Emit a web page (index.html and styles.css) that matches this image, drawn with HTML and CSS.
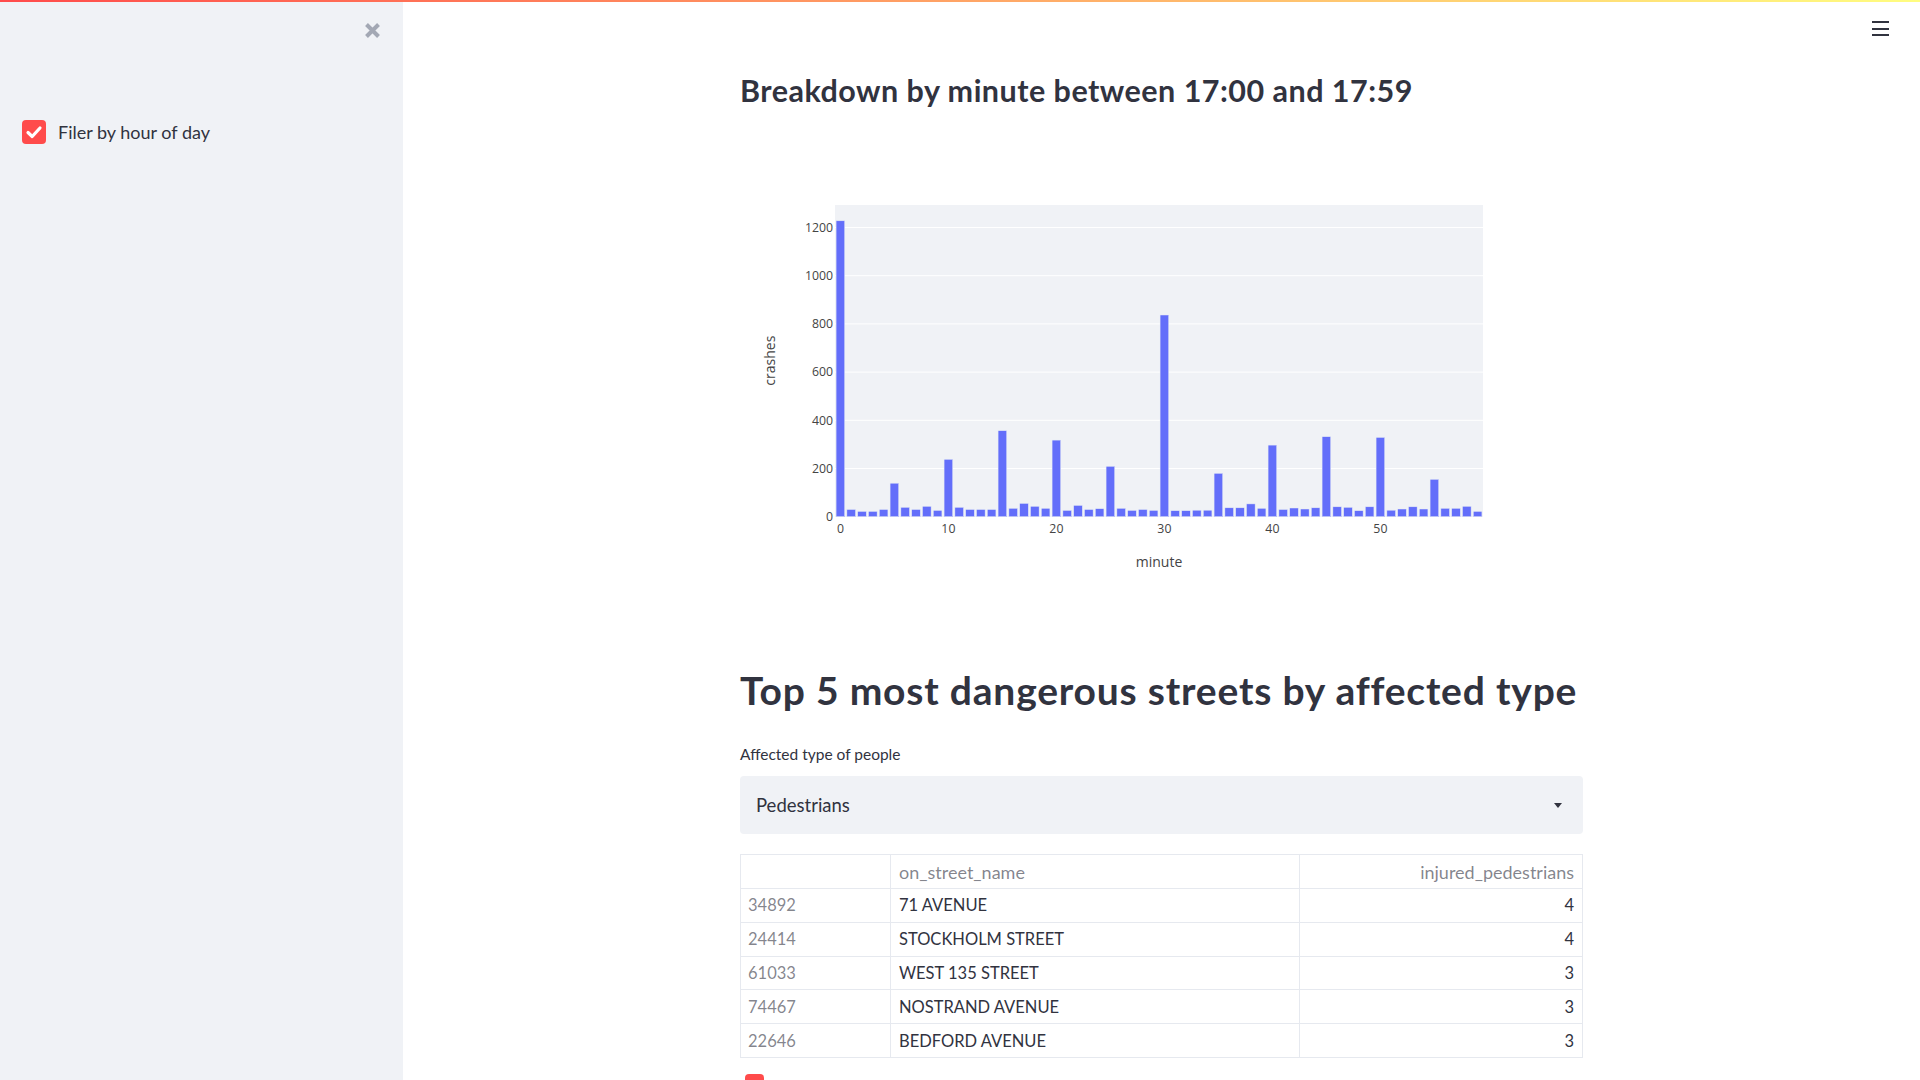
FILE: index.html
```html
<!DOCTYPE html>
<html>
<head>
<meta charset="utf-8">
<link rel="stylesheet" href="styles.css">
</head>
<body>
<div class="decoration"></div>
<div class="app">
  <aside class="sidebar">
    <div class="sidebar-top">
      <button class="close-btn" aria-label="close">
        <svg width="17" height="17" viewBox="0 0 17 17"><path d="M2.5 2.5 L14.5 14.5 M14.5 2.5 L2.5 14.5" stroke="#a3a8b4" stroke-width="4" stroke-linecap="butt"/></svg>
      </button>
    </div>
    <label class="checkbox">
      <span class="box"><svg width="24" height="24" viewBox="0 0 24 24"><path d="M6 12.5 L10.2 16.5 L18 8" fill="none" stroke="#fff" stroke-width="3.2" stroke-linecap="round" stroke-linejoin="round"/></svg></span>
      <span class="cb-label">Filer by hour of day</span>
    </label>
  </aside>
  <main class="main">
    <div class="menu-btn"><span></span><span></span><span></span></div>
    <div class="block">
      <h3 class="h3">Breakdown by minute between 17:00 and 17:59</h3>
      <svg class="chart" width="843" height="460" viewBox="0 0 843 460">
        <rect x="95" y="75" width="648" height="312" fill="#f0f2f6"/>
        <g stroke="#fff" stroke-width="1">
          <line x1="95" x2="743" y1="97.5" y2="97.5"/>
          <line x1="95" x2="743" y1="145.7" y2="145.7"/>
          <line x1="95" x2="743" y1="193.9" y2="193.9"/>
          <line x1="95" x2="743" y1="242.1" y2="242.1"/>
          <line x1="95" x2="743" y1="290.3" y2="290.3"/>
          <line x1="95" x2="743" y1="338.5" y2="338.5"/>
        </g>
        <g fill="#636efa" stroke="#e5ecf6" stroke-width="0.5">
          <rect x="96.08" y="90.8" width="8.64" height="295.9"/>
          <rect x="106.88" y="379.5" width="8.64" height="7.2"/>
          <rect x="117.68" y="381.4" width="8.64" height="5.3"/>
          <rect x="128.48" y="381.4" width="8.64" height="5.3"/>
          <rect x="139.28" y="379.5" width="8.64" height="7.2"/>
          <rect x="150.08" y="353.2" width="8.64" height="33.5"/>
          <rect x="160.88" y="377.3" width="8.64" height="9.4"/>
          <rect x="171.68" y="379.5" width="8.64" height="7.2"/>
          <rect x="182.48" y="376.3" width="8.64" height="10.4"/>
          <rect x="193.28" y="380.4" width="8.64" height="6.3"/>
          <rect x="204.08" y="329.3" width="8.64" height="57.4"/>
          <rect x="214.88" y="377.3" width="8.64" height="9.4"/>
          <rect x="225.68" y="379.5" width="8.64" height="7.2"/>
          <rect x="236.48" y="379.5" width="8.64" height="7.2"/>
          <rect x="247.28" y="379.5" width="8.64" height="7.2"/>
          <rect x="258.08" y="300.7" width="8.64" height="86.0"/>
          <rect x="268.88" y="378.3" width="8.64" height="8.4"/>
          <rect x="279.68" y="373.4" width="8.64" height="13.3"/>
          <rect x="290.48" y="376.3" width="8.64" height="10.4"/>
          <rect x="301.28" y="378.3" width="8.64" height="8.4"/>
          <rect x="312.08" y="310.1" width="8.64" height="76.6"/>
          <rect x="322.88" y="380.4" width="8.64" height="6.3"/>
          <rect x="333.68" y="375.4" width="8.64" height="11.3"/>
          <rect x="344.48" y="379.5" width="8.64" height="7.2"/>
          <rect x="355.28" y="378.7" width="8.64" height="8.0"/>
          <rect x="366.08" y="336.3" width="8.64" height="50.4"/>
          <rect x="376.88" y="378.3" width="8.64" height="8.4"/>
          <rect x="387.68" y="380.4" width="8.64" height="6.3"/>
          <rect x="398.48" y="379.5" width="8.64" height="7.2"/>
          <rect x="409.28" y="380.4" width="8.64" height="6.3"/>
          <rect x="420.08" y="185.0" width="8.64" height="201.7"/>
          <rect x="430.88" y="380.7" width="8.64" height="6.0"/>
          <rect x="441.68" y="380.7" width="8.64" height="6.0"/>
          <rect x="452.48" y="380.2" width="8.64" height="6.5"/>
          <rect x="463.28" y="380.2" width="8.64" height="6.5"/>
          <rect x="474.08" y="343.3" width="8.64" height="43.4"/>
          <rect x="484.88" y="377.8" width="8.64" height="8.9"/>
          <rect x="495.68" y="377.8" width="8.64" height="8.9"/>
          <rect x="506.48" y="373.9" width="8.64" height="12.8"/>
          <rect x="517.28" y="378.3" width="8.64" height="8.4"/>
          <rect x="528.08" y="315.1" width="8.64" height="71.6"/>
          <rect x="538.88" y="379.5" width="8.64" height="7.2"/>
          <rect x="549.68" y="378.0" width="8.64" height="8.7"/>
          <rect x="560.48" y="379.0" width="8.64" height="7.7"/>
          <rect x="571.28" y="377.8" width="8.64" height="8.9"/>
          <rect x="582.08" y="306.7" width="8.64" height="80.0"/>
          <rect x="592.88" y="376.8" width="8.64" height="9.9"/>
          <rect x="603.68" y="377.3" width="8.64" height="9.4"/>
          <rect x="614.48" y="380.7" width="8.64" height="6.0"/>
          <rect x="625.28" y="376.8" width="8.64" height="9.9"/>
          <rect x="636.08" y="307.4" width="8.64" height="79.3"/>
          <rect x="646.88" y="380.2" width="8.64" height="6.5"/>
          <rect x="657.68" y="379.0" width="8.64" height="7.7"/>
          <rect x="668.48" y="376.8" width="8.64" height="9.9"/>
          <rect x="679.28" y="379.0" width="8.64" height="7.7"/>
          <rect x="690.08" y="349.3" width="8.64" height="37.4"/>
          <rect x="700.88" y="378.3" width="8.64" height="8.4"/>
          <rect x="711.68" y="378.3" width="8.64" height="8.4"/>
          <rect x="722.48" y="376.3" width="8.64" height="10.4"/>
          <rect x="733.28" y="381.4" width="8.64" height="5.3"/>
        </g>
        <g class="tick" text-anchor="end">
          <text x="93" y="101.8">1200</text>
          <text x="93" y="150">1000</text>
          <text x="93" y="198.2">800</text>
          <text x="93" y="246.4">600</text>
          <text x="93" y="294.6">400</text>
          <text x="93" y="342.8">200</text>
          <text x="93" y="391">0</text>
        </g>
        <g class="tick" text-anchor="middle">
          <text x="100.4" y="403">0</text>
          <text x="208.4" y="403">10</text>
          <text x="316.4" y="403">20</text>
          <text x="424.4" y="403">30</text>
          <text x="532.4" y="403">40</text>
          <text x="640.4" y="403">50</text>
        </g>
        <text class="axis-title" text-anchor="middle" x="419" y="436.5">minute</text>
        <text class="axis-title" text-anchor="middle" transform="translate(34.5 230.7) rotate(-90)">crashes</text>
      </svg>
      <h2 class="h2">Top 5 most dangerous streets by affected type</h2>
      <div class="field-label">Affected type of people</div>
      <div class="select">
        <span class="select-value">Pedestrians</span>
        <span class="caret"></span>
      </div>
      <table class="df">
        <thead>
          <tr><th class="idx"></th><th class="name">on_street_name</th><th class="num">injured_pedestrians</th></tr>
        </thead>
        <tbody>
          <tr><td class="idx">34892</td><td class="name">71 AVENUE</td><td class="num">4</td></tr>
          <tr><td class="idx">24414</td><td class="name">STOCKHOLM STREET</td><td class="num">4</td></tr>
          <tr><td class="idx">61033</td><td class="name">WEST 135 STREET</td><td class="num">3</td></tr>
          <tr><td class="idx">74467</td><td class="name">NOSTRAND AVENUE</td><td class="num">3</td></tr>
          <tr><td class="idx">22646</td><td class="name">BEDFORD AVENUE</td><td class="num">3</td></tr>
        </tbody>
      </table>
      <div class="next-check"><span class="box small"></span></div>
    </div>
  </main>
</div>
</body>
</html>
```
FILE: styles.css
```css
html, body {
  margin: 0;
  padding: 0;
  height: 1080px;
  overflow: hidden;
  background: #fff;
  font-family: Lato, "Open Sans", sans-serif;
  color: #31333f;
}

.decoration {
  position: fixed;
  top: 0;
  left: 0;
  right: 0;
  height: 2px;
  background: linear-gradient(90deg, #ff4b4b, #fffd80);
  z-index: 10;
}

.app {
  display: flex;
  height: 1080px;
}

.sidebar {
  width: 403px;
  flex: none;
  background: #f0f2f6;
  box-sizing: border-box;
  padding: 22px 22px 0 22px;
}

.sidebar-top {
  display: flex;
  justify-content: flex-end;
  height: 17px;
}

.close-btn {
  border: 0;
  background: none;
  padding: 0;
  width: 17px;
  height: 17px;
  display: block;
}
.close-btn svg { display: block; }

.checkbox {
  display: flex;
  align-items: center;
  gap: 12px;
  margin-top: 81px;
}

.box {
  width: 24px;
  height: 24px;
  border-radius: 4px;
  background: #ff4b4b;
  display: block;
  flex: none;
}
.box svg { display: block; }

.cb-label {
  font-size: 18px;
  line-height: 24px;
  color: #31333f;
}

.main {
  flex: 1;
  position: relative;
}

.menu-btn {
  position: absolute;
  top: 21px;
  right: 31px;
  width: 17px;
  display: flex;
  flex-direction: column;
  gap: 4.5px;
}
.menu-btn span {
  display: block;
  height: 2px;
  background: #31333f;
}

.block {
  width: 843px;
  margin: 0 auto;
  padding-top: 72px;
}

.h3 {
  margin: 0;
  font-size: 30.5px;
  line-height: 36px;
  font-weight: 700;
  color: #31333f;
  letter-spacing: 0.48px;
}

.chart {
  display: block;
  margin-top: 22px;
}
.tick {
  font-family: "Open Sans", sans-serif;
  font-size: 12.3px;
  fill: #444;
}
.axis-title {
  font-family: "Open Sans", sans-serif;
  font-size: 14px;
  fill: #444;
}

.h2 {
  margin: 77px 0 0 0;
  font-size: 39px;
  line-height: 46px;
  font-weight: 700;
  color: #31333f;
  letter-spacing: 0.8px;
}

.field-label {
  margin-top: 31px;
  font-size: 15.5px;
  line-height: 20px;
  color: #31333f;
}

.select {
  margin-top: 12px;
  height: 58px;
  background: #f0f2f6;
  border-radius: 4px;
  display: flex;
  align-items: center;
  justify-content: space-between;
  padding: 0 21px 0 16px;
}
.select-value {
  font-size: 18.5px;
  color: #31333f;
}
.caret {
  width: 0;
  height: 0;
  border-left: 4.5px solid transparent;
  border-right: 4.5px solid transparent;
  border-top: 5px solid #31333f;
}

.df {
  margin-top: 20px;
  width: 843px;
  border-collapse: collapse;
  font-size: 16.5px;
}
.df th, .df td {
  border: 1px solid #e6e9ef;
  height: 33.8px;
  padding: 0 8px;
  box-sizing: border-box;
  font-weight: 400;
}
.df th {
  height: 34px;
  font-size: 18px;
  color: rgba(49, 51, 63, 0.6);
}
.df .idx {
  width: 150px;
  text-align: left;
  color: rgba(49, 51, 63, 0.6);
  padding-left: 7px;
}
.df .name {
  width: 409px;
  text-align: left;
}
.df .num {
  text-align: right;
}

.next-check {
  margin-top: 16px;
  padding-left: 5px;
}
.box.small {
  width: 19px;
  height: 19px;
}
```
